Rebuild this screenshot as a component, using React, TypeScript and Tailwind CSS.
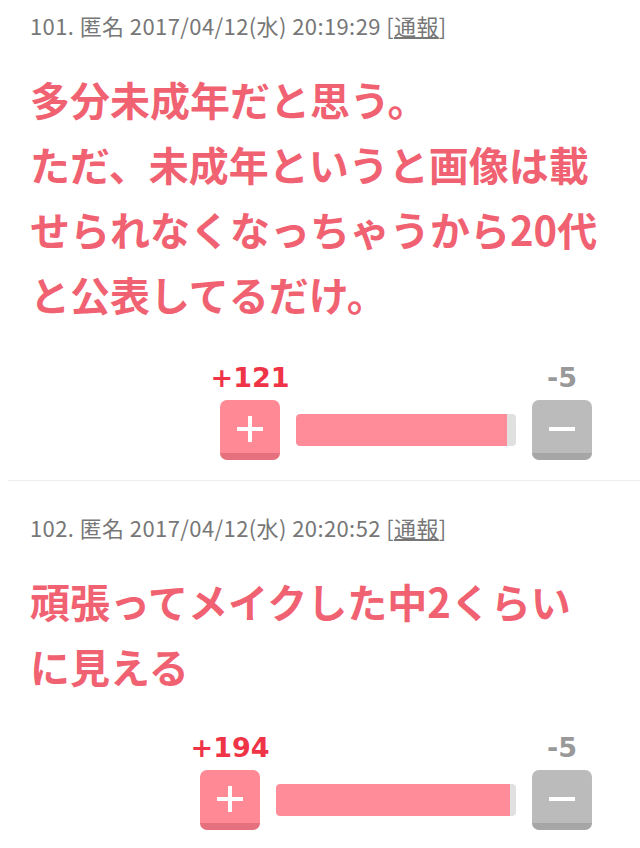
type Post = {
  no: number;
  date: string;
  lines: string;
  plus: number;
  minus: number;
  barWidth: string;
};

const posts: Post[] = [
  {
    no: 101,
    date: "2017/04/12(水) 20:19:29",
    lines: "多分未成年だと思う。\nただ、未成年というと画像は載せられなくなっちゃうから20代と公表してるだけ。",
    plus: 121,
    minus: 5,
    barWidth: "w-[220px]",
  },
  {
    no: 102,
    date: "2017/04/12(水) 20:20:52",
    lines: "頑張ってメイクした中2くらいに見える",
    plus: 194,
    minus: 5,
    barWidth: "w-[240px]",
  },
];

const cjk = "font-['Noto_Sans_CJK_JP',sans-serif]";
const score = "font-['DejaVu_Sans',sans-serif]";

function VoteBar({ post }: { post: Post }) {
  const ratio = (post.plus / (post.plus + post.minus)) * 100;

  return (
    <div className="flex items-end justify-end gap-[6px] pr-[38px]">
      <div className="flex w-[80px] flex-col items-center">
        <span className={`${score} text-[27px] font-bold leading-[30px] text-[#ee3446]`}>+{post.plus}</span>
        <button className="mt-[7px] flex h-[60px] w-[60px] items-center justify-center rounded-[7px] border-b-[7px] border-[#e6717e] bg-[#ff8a96]">
          <svg width="30" height="30" viewBox="0 0 30 30" className="mt-[4px]">
            <path d="M15 2v26M2 15h26" stroke="#fff" strokeWidth="4" />
          </svg>
        </button>
      </div>
      <div className={`mb-[14px] h-[32px] ${post.barWidth} overflow-hidden rounded-[4px] bg-[#e0e0e0]`}>
        <div className="h-full rounded-l-[4px] bg-[#ff8c98]" style={{ width: `${ratio}%` }} />
      </div>
      <div className="flex w-[80px] flex-col items-center">
        <span className={`${score} text-[27px] font-bold leading-[30px] text-[#999]`}>-{post.minus}</span>
        <button className="mt-[7px] flex h-[60px] w-[60px] items-center justify-center rounded-[7px] border-b-[7px] border-[#a6a6a6] bg-[#bbbbbb]">
          <svg width="30" height="30" viewBox="0 0 30 30" className="mt-[4px]">
            <path d="M2 15h26" stroke="#fff" strokeWidth="4" />
          </svg>
        </button>
      </div>
    </div>
  );
}

function Comment({ post, first }: { post: Post; first: boolean }) {
  return (
    <section className={`px-[30px] ${first ? "pt-[14px]" : "pt-[35px]"} pb-[20px]`}>
      <p className={`${cjk} text-[22px] leading-[22px] tracking-[0.4px] text-[#777]`}>
        {post.no}. 匿名 {post.date} [<span className="underline underline-offset-2">通報</span>]
      </p>
      <p className={`${cjk} mt-[31px] whitespace-pre-line text-[40px] font-bold leading-[65px] text-[#f06272]`}>
        {post.lines}
      </p>
      <div className={`${first ? "mt-[36px]" : "mt-[34px]"} -mr-[30px]`}>
        <VoteBar post={post} />
      </div>
    </section>
  );
}

export default function App() {
  return (
    <div className="min-h-[848px] w-[640px] overflow-hidden bg-white">
      <Comment post={posts[0]} first />
      <div className="ml-2 border-t border-[#eeeeee]" />
      <Comment post={posts[1]} first={false} />
    </div>
  );
}
